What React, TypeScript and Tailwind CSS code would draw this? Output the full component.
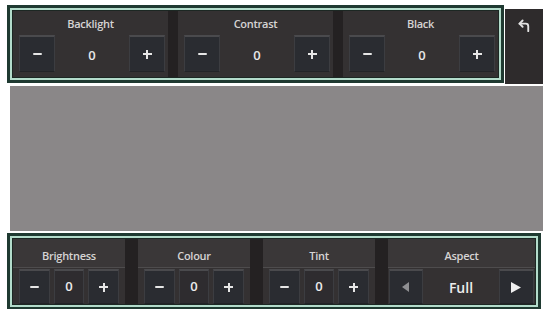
import React from "react";

const Minus = () => <span className="block w-[9px] h-[2px] bg-[#e6e6e6] rounded-[1px]" />;
const Plus = () => (
  <span className="relative block w-[9px] h-[9px]">
    <span className="absolute left-0 top-[3.5px] w-[9px] h-[2px] bg-[#e6e6e6]" />
    <span className="absolute top-0 left-[3.5px] w-[2px] h-[9px] bg-[#e6e6e6]" />
  </span>
);

const Btn = ({ children, className = "" }: { children: React.ReactNode; className?: string }) => (
  <div
    className={
      "flex items-center justify-center bg-[#2a2c31] border-t-2 border-t-[#4a4a4d] border-x border-x-[#3c3d41] border-b border-b-[#222327] " +
      className
    }
  >
    {children}
  </div>
);

const TopSection = ({ label }: { label: string }) => (
  <div className="flex flex-col bg-[#343132]">
    <div className="h-[22px] flex items-end justify-center pb-[1px] text-[11px] font-semibold text-[#d6d4d4] tracking-tight">
      {label}
    </div>
    <div className="flex items-center justify-between pl-[6px] pr-[3px] pt-[2px] pb-[4px]">
      <Btn className="w-[36px] h-[37px]">
        <Minus />
      </Btn>
      <div className="text-[13px] font-semibold text-[#e8e8e8] pt-[4px]">0</div>
      <Btn className="w-[36px] h-[37px]">
        <Plus />
      </Btn>
    </div>
  </div>
);

const BottomSection = ({ label }: { label: string }) => (
  <div className="flex flex-col bg-[#343132]">
    <div className="h-[29px] shrink-0 flex items-end justify-center pb-[3px] bg-[#3a3738] border-b border-b-[#4e4c4d] text-[11px] font-semibold text-[#d6d4d4] tracking-tight">
      {label}
    </div>
    <div className="grid grid-cols-3 gap-[4px] px-[6px] pt-[1px]">
      <Btn className="h-[35px]">
        <Minus />
      </Btn>
      <Btn className="h-[35px] bg-[#2e2c2f]">
        <span className="text-[13px] font-semibold text-[#ececec]">0</span>
      </Btn>
      <Btn className="h-[35px]">
        <Plus />
      </Btn>
    </div>
  </div>
);

const Frame = ({ children, className = "" }: { children: React.ReactNode; className?: string }) => (
  <div className={"bg-[#1f3a31] p-[3px] shrink-0 " + className}>
    <div className="bg-[#b3dccb] p-[2px] h-full">
      <div className="bg-[#1c2723] p-[1px] h-full">{children}</div>
    </div>
  </div>
);

export default function App() {
  return (
    <div
      className="w-[543px] h-[309px] bg-white overflow-hidden flex flex-col"
      style={{ fontFamily: '"Open Sans", "Noto Sans", sans-serif' }}
    >
      <div className="flex items-start pt-[5px] pl-[7px] shrink-0">
        <Frame className="w-[497px] h-[78px]">
          <div className="h-full bg-[#242122] grid grid-cols-3 gap-[10px]">
            <TopSection label="Backlight" />
            <TopSection label="Contrast" />
            <TopSection label="Black" />
          </div>
        </Frame>
        <div className="ml-[1px] mt-[4px] w-[38px] h-[75px] bg-[#2e2b2c] flex justify-center pt-[9px]">
          <svg width="15" height="15" viewBox="0 0 24 24" fill="none" stroke="#e2e2e2" strokeWidth="3" strokeLinecap="round" strokeLinejoin="round">
            <path d="M18 21v-8a4 4 0 0 0-4-4H4" />
            <path d="M9 14 4 9l5-5" />
          </svg>
        </div>
      </div>
      <div className="ml-[10px] mt-[2px] h-[145px] shrink-0 bg-[#8a8788]" />
      <Frame className="ml-[7px] mt-[2px] w-[534px] h-[77px]">
        <div className="h-full bg-[#242122] grid grid-cols-[112px_112px_112px_1fr] gap-[13px]">
          <BottomSection label="Brightness" />
          <BottomSection label="Colour" />
          <BottomSection label="Tint" />
          <div className="flex flex-col bg-[#343132]">
            <div className="h-[29px] shrink-0 flex items-end justify-center pb-[3px] bg-[#3a3738] border-b border-b-[#4e4c4d] text-[11px] font-semibold text-[#d6d4d4] tracking-tight">
              Aspect
            </div>
            <div className="flex items-center justify-between pl-[1px] pr-[1px] pt-[1px]">
              <Btn className="w-[34px] h-[35px]">
                <svg width="8" height="10" viewBox="0 0 8 10">
                  <path d="M7 0 L0 5 L7 10 Z" fill="#8f8f92" />
                </svg>
              </Btn>
              <span className="text-[14px] font-semibold text-[#ececec] pt-[2px]">Full</span>
              <Btn className="w-[35px] h-[35px]">
                <svg width="10" height="11" viewBox="0 0 10 11">
                  <path d="M0 0 L10 5.5 L0 11 Z" fill="#f0f0f0" />
                </svg>
              </Btn>
            </div>
          </div>
        </div>
      </Frame>
    </div>
  );
}
